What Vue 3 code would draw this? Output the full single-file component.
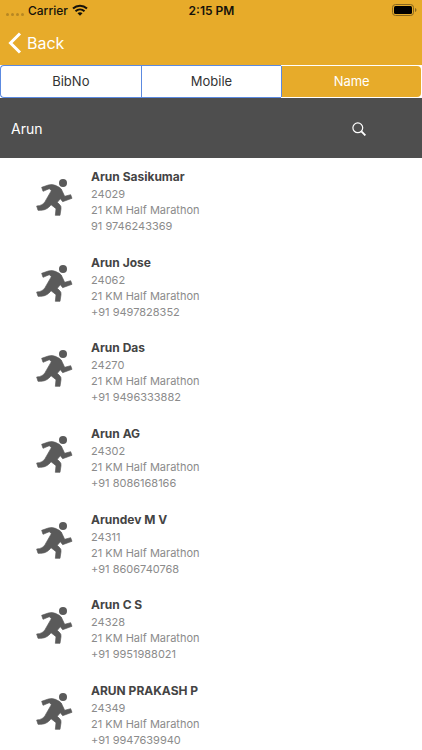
<script setup>
import { ref } from 'vue'

const tabs = ['BibNo', 'Mobile', 'Name']
const activeTab = ref('Name')
const query = ref('Arun')
const race = '21 KM Half Marathon'
const runners = [
  { name: 'Arun Sasikumar', bib: '24029', phone: '91 9746243369' },
  { name: 'Arun Jose', bib: '24062', phone: '+91 9497828352' },
  { name: 'Arun Das', bib: '24270', phone: '+91 9496333882' },
  { name: 'Arun AG', bib: '24302', phone: '+91 8086168166' },
  { name: 'Arundev M V', bib: '24311', phone: '+91 8606740768' },
  { name: 'Arun C S', bib: '24328', phone: '+91 9951988021' },
  { name: 'ARUN PRAKASH P', bib: '24349', phone: '+91 9947639940' },
]
</script>

<template>
  <div class="screen">
    <header class="top">
      <div class="status">
        <div class="carrier">
          <span class="dots"><i></i><i></i><i></i><i></i></span>
          <span>Carrier</span>
          <svg class="wifi" viewBox="0 0 16 12" aria-hidden="true">
            <path d="M1 4.6C5 .9 11 .9 15 4.6M3.5 7.2c2.6-2.3 6.4-2.3 9 0" fill="none" stroke="#15120a" stroke-width="2" />
            <path d="M5.5 9.2c1.500-1.300 3.500-1.300 5 0L8 11.800z" fill="#15120a" />
          </svg>
        </div>
        <span class="time">2:15 PM</span>
        <svg class="battery" viewBox="0 0 25 12" aria-hidden="true">
          <rect x=".5" y=".5" width="21" height="11" rx="3" fill="none" stroke="#86661f" />
          <rect x="2" y="2" width="18" height="8" rx="1.500" fill="#000" />
          <path d="M23 4v4c2-.8 2-3.200 0-4z" fill="#86661f" />
        </svg>
      </div>
      <a class="back" href="#">
        <svg viewBox="0 0 14 22" aria-hidden="true">
          <path d="M12 1.500 2.500 11l9.500 9.500" fill="none" stroke="#fff" stroke-width="3" />
        </svg>
        <span>Back</span>
      </a>
    </header>

    <nav class="tabs">
      <button
        v-for="tab in tabs"
        :key="tab"
        type="button"
        :class="{ active: tab === activeTab }"
        @click="activeTab = tab"
      >{{ tab }}</button>
    </nav>

    <form class="search" @submit.prevent>
      <input v-model="query" type="text" aria-label="Search runners" />
      <button type="submit" aria-label="Search">
        <svg viewBox="0 0 14 14" aria-hidden="true">
          <circle cx="5.800" cy="5.800" r="4.900" fill="none" stroke="#fff" stroke-width="1.200" />
          <path d="m9.400 9.400 4 4" stroke="#fff" stroke-width="1.900" />
        </svg>
      </button>
    </form>

    <ul class="list">
      <li v-for="runner in runners" :key="runner.bib">
        <svg class="runner" viewBox="0 0 120 126" aria-hidden="true">
          <circle cx="87" cy="21" r="12" />
          <path d="M23 34 43 27Q54 24 64 28L76 34Q83 38 85 46L92 61 110 56 114 67 86 77 79 68 70 79 78 87Q82 91 81 98L78 118H64L66 98 51 86C42 99 30 104 12 103L8 90C21 89 28 85 33 77L52 44 46 38 27 46Z" stroke="#5a5a5a" stroke-width="2" stroke-linejoin="round" />
        </svg>
        <div>
          <h2>{{ runner.name }}</h2>
          <p>{{ runner.bib }}</p>
          <p>{{ race }}</p>
          <p>{{ runner.phone }}</p>
        </div>
      </li>
    </ul>
  </div>
</template>

<style>
body {
  margin: 0;
  background: #fff;
}
</style>

<style scoped>
.screen {
  display: flex;
  flex-direction: column;
  min-height: 100vh;
  font-family: Inter, "Liberation Sans", sans-serif;
  color: #444;
}
.top {
  background: #e7ab2a;
  height: 65px;
}
.status {
  display: grid;
  grid-template-columns: 1fr auto 1fr;
  align-items: center;
  height: 20px;
  padding: 0 5px 0 6px;
  font-size: 12px;
  font-weight: 500;
  color: #15120a;
}
.carrier {
  display: flex;
  align-items: center;
  gap: 4px;
}
.dots {
  display: flex;
  gap: 2px;
  padding-top: 8px;
}
.dots i {
  width: 3px;
  height: 3px;
  border-radius: 50%;
  background: #b78723;
}
.wifi {
  width: 16px;
  height: 12px;
}
.time {
  font-weight: 600;
}
.battery {
  justify-self: end;
  width: 25px;
  height: 12px;
}
.back {
  display: inline-flex;
  align-items: center;
  gap: 5px;
  height: 45px;
  padding-left: 8px;
  color: #fff;
  font-size: 16px;
  text-decoration: none;
}
.back svg {
  width: 14px;
  height: 22px;
}
.tabs {
  display: grid;
  grid-template-columns: repeat(3, 1fr);
  height: 33px;
  background: #fff;
}
.tabs button {
  border: 1px solid #5c8ae0;
  border-right-width: 0;
  padding: 0;
  background: #fff;
  color: #333;
  font: 400 13px/1 Inter, "Liberation Sans", sans-serif;
}
.tabs button:first-child {
  border-radius: 4px 0 0 4px;
}
.tabs button:last-child {
  border-radius: 0 4px 4px 0;
}
.tabs button.active {
  margin: 1px 1px 1px 0;
  border-width: 0 0 0 1px;
  background: #e7ab2a;
  color: #fff;
}
.search {
  box-sizing: border-box;
  display: flex;
  align-items: center;
  height: 60px;
  padding: 2px 49px 0 11px;
  background: #4e4e4e;
}
.search input {
  flex: 1;
  min-width: 0;
  border: 0;
  padding: 0;
  background: transparent;
  color: #fff;
  font: 400 14px/20px Inter, "Liberation Sans", sans-serif;
  outline: 0;
}
.search button {
  display: grid;
  place-items: center;
  width: 28px;
  height: 28px;
  border: 0;
  padding: 0;
  background: transparent;
}
.search button svg {
  width: 14px;
  height: 14px;
}
.list {
  flex: 1;
  display: flex;
  flex-direction: column;
  justify-content: space-between;
  margin: 0;
  padding: 9px 0 2px;
  list-style: none;
}
.list li {
  display: flex;
  align-items: flex-start;
  gap: 17px;
  padding-left: 34px;
}
.runner {
  width: 40px;
  height: 42px;
  margin-top: 9px;
  fill: #5a5a5a;
}
h2,
p {
  margin: 0;
}
h2 {
  font-size: 12px;
  font-weight: 700;
  line-height: 19px;
}
p {
  font-size: 11px;
  line-height: 16px;
  color: #8b8b8b;
}
</style>
